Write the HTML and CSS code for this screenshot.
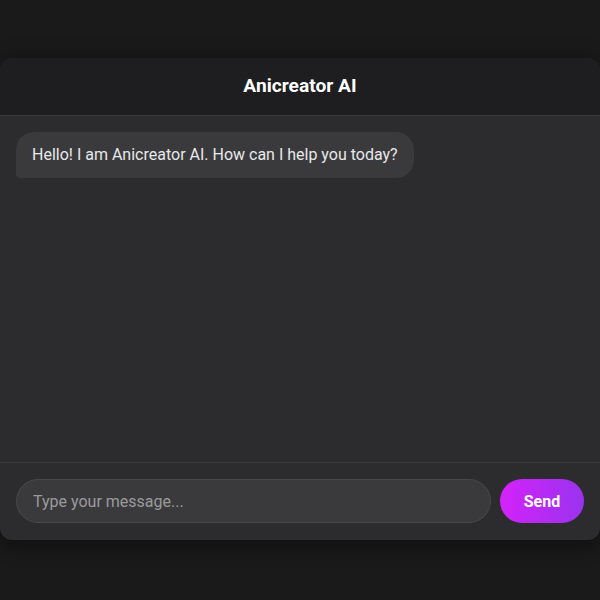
FILE: index.html
```html
<!DOCTYPE html>
<html lang="en">
<head>
<meta charset="utf-8">
<title>Anicreator AI</title>
<link rel="stylesheet" href="styles.css">
</head>
<body>
<div class="chat">
  <header class="chat-header">Anicreator AI</header>
  <main class="messages">
    <div class="bubble bot">Hello! I am Anicreator AI. How can I help you today?</div>
  </main>
  <form class="composer">
    <input class="composer-input" type="text" placeholder="Type your message...">
    <button class="send-btn" type="button">Send</button>
  </form>
</div>
</body>
</html>
```
FILE: styles.css
```css
* { box-sizing: border-box; }
html, body { height: 100%; }
body {
  margin: 0;
  padding-top: 58px;
  background: #1a1a1b;
  font-family: Roboto, "Liberation Sans", sans-serif;
  display: flex;
  align-items: flex-start;
  justify-content: center;
}
.chat {
  width: 100%;
  max-width: 600px;
  height: 482px;
  background: #2c2c2e;
  border-radius: 12px;
  box-shadow: 0 4px 20px rgba(0,0,0,0.5);
  display: flex;
  flex-direction: column;
  overflow: hidden;
}
.chat-header {
  background: #1e1e20;
  color: #ffffff;
  font-size: 19.2px;
  font-weight: 700;
  text-align: center;
  padding: 17px 16px 18px;
  line-height: 22px;
  border-bottom: 1px solid #3a3a3c;
}
.messages {
  flex: 1;
  padding: 16px;
  display: flex;
  flex-direction: column;
  align-items: flex-start;
}
.bubble {
  font-size: 16px;
  line-height: 22px;
  padding: 12px 16px;
  border-radius: 18px 18px 18px 4px;
}
.bot {
  background: #3a3a3c;
  color: #e8e8ea;
}
.composer {
  margin: 0;
  display: flex;
  gap: 9px;
  padding: 16px 16px 17px;
  border-top: 1px solid #3a3a3c;
}
.composer-input {
  flex: 1;
  height: 44px;
  border-radius: 22px;
  border: 1px solid #48484a;
  background: #3a3a3c;
  color: #ffffff;
  font-family: inherit;
  font-size: 16px;
  padding: 0 16px;
  outline: none;
}
.composer-input::placeholder { color: #9a9a9c; }
.send-btn {
  width: 84px;
  height: 44px;
  border: none;
  border-radius: 22px;
  background: linear-gradient(90deg, #d422fb, #9a33ee);
  color: #ffffff;
  font-family: inherit;
  font-size: 16px;
  font-weight: 700;
}
```
